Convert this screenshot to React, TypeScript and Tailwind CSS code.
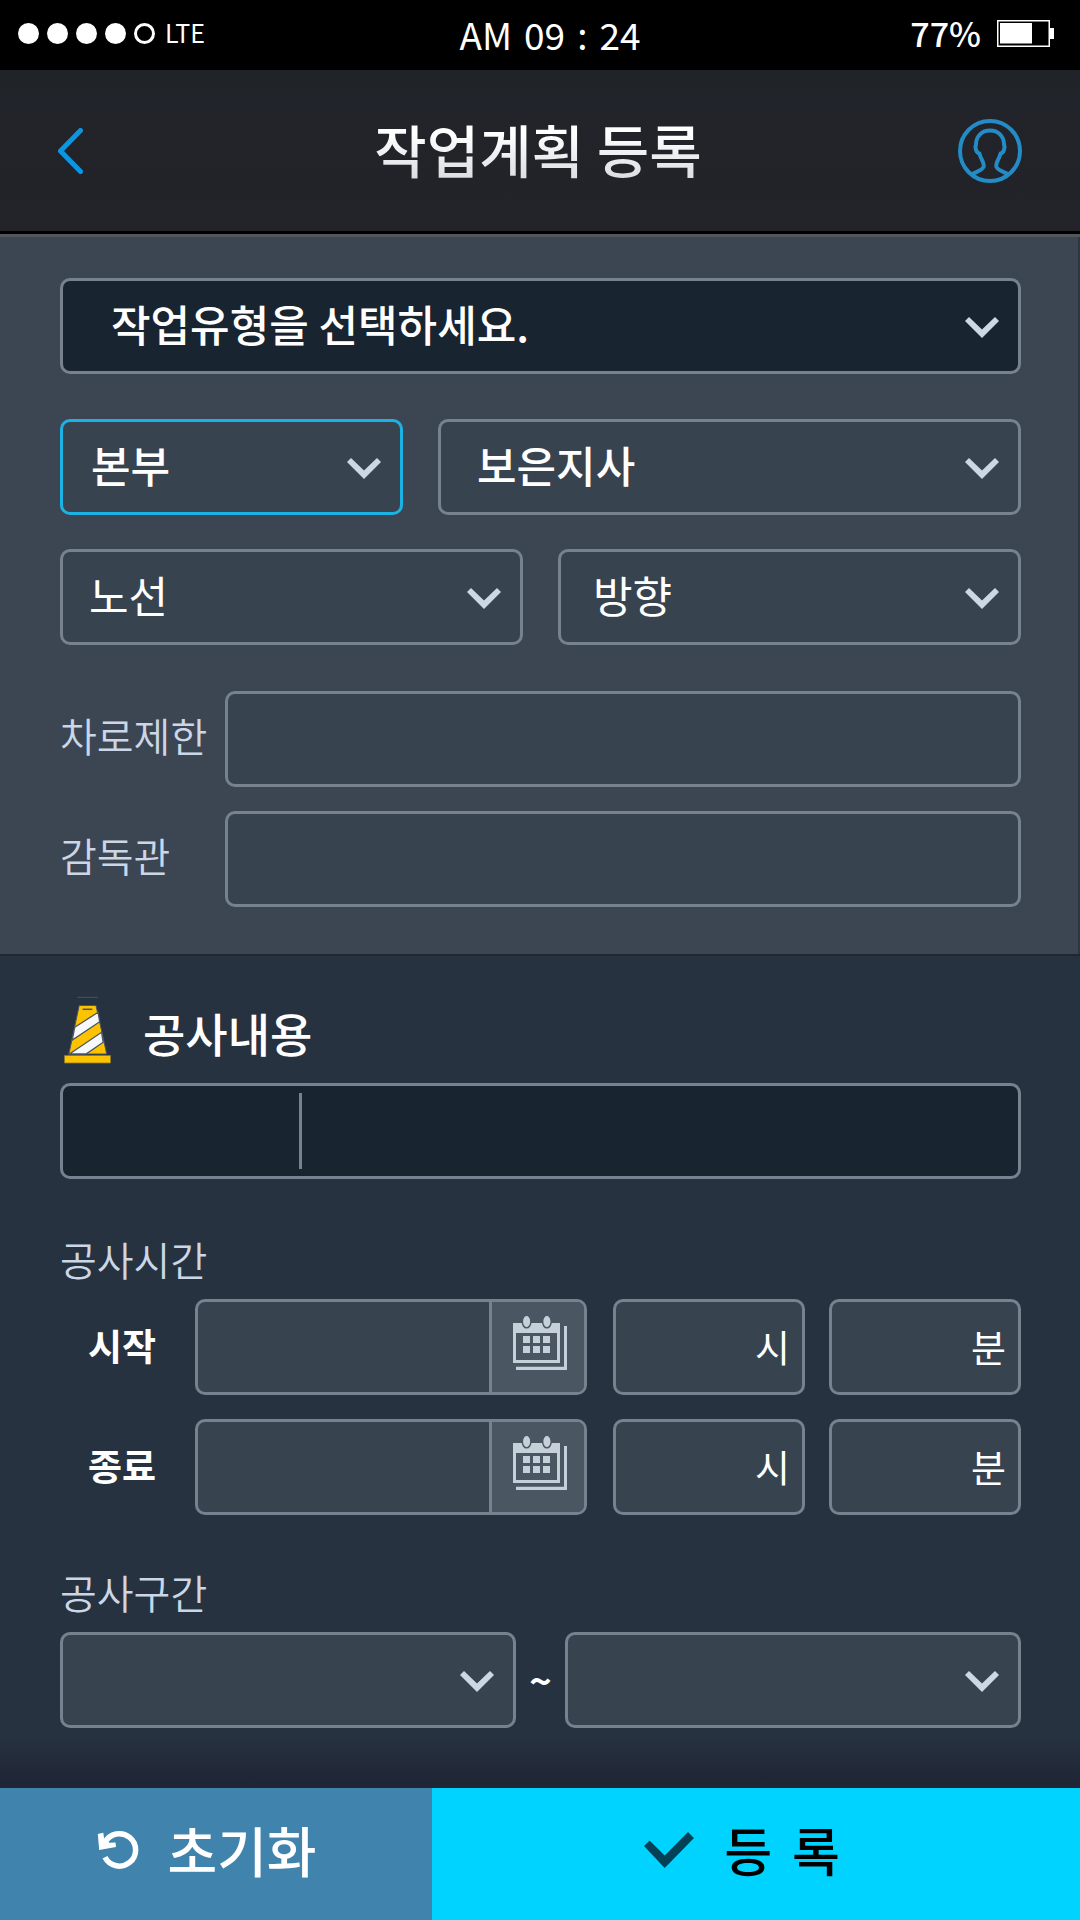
import type { ReactNode } from "react";

const frame = "h-24 w-full min-w-0 appearance-none rounded-[10px] border-[3px] text-white outline-none";
const box = `${frame} border-[#76828f] bg-[#384350]`;
const darkBox = `${frame} border-[#76828f] bg-[#192431]`;
const activeBox = `${frame} border-[#1cb2e3] bg-[#384350]`;

function Chevron() {
  return (
    <svg
      className="pointer-events-none absolute top-[39px] right-[22px] h-[21px] w-[34px]"
      viewBox="0 0 34 21"
      fill="#cdd8e7"
      aria-hidden="true"
    >
      <path d="M0 4 4 0l13 12.500L30 0l4 4-17 17z" />
    </svg>
  );
}

function SelectBox({
  label,
  value,
  className,
  look = box,
}: {
  label: string;
  value: string;
  className: string;
  look?: string;
}) {
  return (
    <div className="relative min-w-0 flex-1">
      <select aria-label={label} defaultValue={value} className={`${look} pr-16 pb-1.5 ${className}`}>
        <option value={value}>{value}</option>
      </select>
      <Chevron />
    </div>
  );
}

function LabelledInput({ id, label }: { id: string; label: string }) {
  return (
    <div className="flex items-center">
      <label htmlFor={id} className="w-[165px] shrink-0 pb-2 text-[40px] leading-[56px] font-[350] whitespace-nowrap text-[#cbd7e6]">
        {label}
      </label>
      <input id={id} type="text" className={`${box} px-6 text-[40px]`} />
    </div>
  );
}

function CalendarIcon() {
  return (
    <svg className="mb-2 ml-1 h-[54px] w-[54px]" viewBox="0 0 54 54" fill="#c5d0d9" aria-hidden="true">
      <path fillRule="evenodd" d="M0 7h47v40H0zM3 17v27h41V17z" />
      <path d="M10 20h7v7h-7zM20 20h7v7h-7zM30 20h7v7h-7zM10 30h7v7h-7zM20 30h7v7h-7zM30 30h7v7h-7z" />
      <path d="M51 10h3v44H3v-3.300h48z" />
      <g stroke="#4b5663" strokeWidth="1.500">
        <ellipse cx="13.600" cy="5.500" rx="4.300" ry="6.300" />
        <ellipse cx="33.900" cy="5.500" rx="4.300" ry="6.300" />
      </g>
    </svg>
  );
}

function UnitInput({ label, unit }: { label: string; unit: string }) {
  return (
    <label className="flex h-24 w-48 shrink-0 items-center rounded-[10px] border-[3px] border-[#76828f] bg-[#384350] pr-3 pb-1 pl-4 text-[38px] text-white">
      <input type="text" aria-label={label} className="w-0 flex-1 bg-transparent outline-none" />
      <span>{unit}</span>
    </label>
  );
}

function TimeRow({ id, label }: { id: string; label: string }) {
  return (
    <div className="flex items-center gap-6">
      <div className="flex min-w-0 flex-1 items-center pr-0.5">
        <label htmlFor={id} className="w-[135px] shrink-0 pb-1 pl-7 text-[37px] leading-[52px] font-bold text-white">
          {label}
        </label>
        <div className="flex h-24 min-w-0 flex-1 overflow-hidden rounded-[10px] border-[3px] border-[#76828f] bg-[#384350]">
          <input id={id} type="text" className="w-0 flex-1 bg-transparent px-4 text-[36px] text-white outline-none" />
          <button
            type="button"
            aria-label={`${label} 날짜 선택`}
            className="flex w-[95px] items-center justify-center border-l-[3px] border-[#76828f] bg-[#4b5663]"
          >
            <CalendarIcon />
          </button>
        </div>
      </div>
      <UnitInput label={`${label} 시`} unit="시" />
      <UnitInput label={`${label} 분`} unit="분" />
    </div>
  );
}

function GroupLabel({ children }: { children: ReactNode }) {
  return <h3 className="text-[40px] leading-[56px] font-[350] text-[#cbd7e6]">{children}</h3>;
}

function StatusBar() {
  return (
    <div className="grid h-[70px] grid-cols-[1fr_auto_1fr] items-center bg-black text-white">
      <div className="flex items-center pb-1 pl-[18px]">
        <div className="flex gap-2">
          <span className="size-[21px] rounded-full bg-white" />
          <span className="size-[21px] rounded-full bg-white" />
          <span className="size-[21px] rounded-full bg-white" />
          <span className="size-[21px] rounded-full bg-white" />
          <span className="size-[21px] rounded-full border-[3px] border-white" />
        </div>
        <span className="ml-2.5 pb-0.5 text-[25px] leading-8">LTE</span>
      </div>
      <span className="flex gap-3 pb-0.5 pl-5 text-[37px] leading-[50px]">
        <span>AM</span> <span>09</span> <span>:</span> <span>24</span>
      </span>
      <div className="flex items-center justify-end gap-4 pr-[26px] pb-1">
        <span className="text-[34px] leading-[50px] font-medium">77%</span>
        <svg className="h-[27px] w-[57px]" viewBox="0 0 57 27" fill="#fff" aria-hidden="true">
          <path fillRule="evenodd" d="M0 0h53v8h4v11h-4v8H0zM1.500 1.500v24h50v-24z" />
          <path d="M3 3h32v20.500H3z" />
        </svg>
      </div>
    </div>
  );
}

export default function App() {
  return (
    <div className="flex min-h-screen flex-col bg-[#273240] font-['Noto_Sans_CJK_KR',sans-serif]">
      <StatusBar />
      <header className="flex h-[164px] items-center justify-between border-b-[3px] border-black bg-linear-to-b from-[#202429] to-[#232329] px-[58px]">
        <button type="button" aria-label="뒤로" className="flex w-[60px]">
          <svg className="h-[46px] w-[25px]" viewBox="0 0 25 46" fill="none" stroke="#0c95e3" strokeWidth="5" strokeLinecap="round" strokeLinejoin="round" aria-hidden="true">
            <path d="M22.500 2.500 2.500 23l20 20.500" />
          </svg>
        </button>
        <h1 className="bg-linear-to-b from-white from-30% to-[#dcdee2] to-80% bg-clip-text pb-1.5 text-[57px] leading-[84px] font-medium text-transparent">
          작업계획 등록
        </h1>
        <button type="button" aria-label="내 정보">
          <svg className="size-16" viewBox="0 0 64 64" fill="none" stroke="#238cc6" strokeWidth="4" strokeLinejoin="round" aria-hidden="true">
            <circle cx="32" cy="32" r="30" />
            <path d="M13 55.500c6-3 11-4 12.500-7.500 1.500-4-3-8-4-13.500-3-.5-5-6-3.500-9C18 17 24 11.500 32 11.500S46 17 46 25.500c1.500 3-.5 8.500-3.500 9-1 5.500-5.500 9.500-4 13.500C40 51.500 45 52.500 51 55.500" />
          </svg>
        </button>
      </header>

      <section className="flex flex-col border-t-[3px] border-t-[#50565a] border-b-2 border-b-[#1d2834] bg-[#3c4653] pt-[41px] pr-[59px] pb-[47px] pl-[60px] shadow-[inset_-2px_0_0_#2b3642]">
        <div className="flex">
          <SelectBox label="작업유형" value="작업유형을 선택하세요." look={darkBox} className="pl-12 text-[43px] font-medium" />
        </div>
        <div className="mt-[45px] grid grid-cols-[343fr_583fr] gap-[35px]">
          <SelectBox label="본부" value="본부" look={activeBox} className="pl-7 text-[43px] font-medium" />
          <SelectBox label="지사" value="보은지사" className="pl-9 text-[43px] font-medium" />
        </div>
        <div className="mt-[34px] grid grid-cols-2 gap-[35px]">
          <SelectBox label="노선" value="노선" className="pl-[26px] text-[43px]" />
          <SelectBox label="방향" value="방향" className="pl-8 text-[43px]" />
        </div>
        <div className="mt-[46px] flex flex-col gap-6">
          <LabelledInput id="lane" label="차로제한" />
          <LabelledInput id="supervisor" label="감독관" />
        </div>
      </section>

      <main className="flex flex-1 flex-col pt-[39px] pr-[59px] pl-[60px]">
        <h2 className="flex h-[70px] items-center gap-8 pl-1">
          <svg className="h-[68px] w-[47px]" viewBox="0 0 47 68" aria-hidden="true">
            <path d="M13.500 1.300H34" stroke="#46535f" />
            <path d="M15.200 9.500H32L42.700 58H4.900z" fill="#fdc300" stroke="#4a5560" />
            <path d="m10.700 31.300 23.400-15 1.600 9.500L8.300 44zM5.500 58l32.100-21.700 1.600 10L22 58z" fill="#f7f9fb" stroke="#4a5560" strokeWidth="1.300" />
            <path d="M18.600 13.300h9.700" stroke="#4a5560" strokeWidth="1.500" />
            <path d="M.5 59.500h46V67H.5z" fill="#fdc300" stroke="#8a7a2c" strokeWidth=".8" />
          </svg>
          <span className="pt-1 text-[46px] leading-[66px] font-medium text-white">공사내용</span>
        </h2>
        <div className="relative mt-[18px]">
          <input type="text" aria-label="공사내용" className={`${darkBox} px-6 text-[40px]`} />
          <span className="absolute top-2.5 left-[239px] h-19 w-[3px] bg-[#76828f]" />
        </div>

        <div className="mt-[52px]">
          <GroupLabel>공사시간</GroupLabel>
          <div className="mt-3 flex flex-col gap-6">
            <TimeRow id="start" label="시작" />
            <TimeRow id="end" label="종료" />
          </div>
        </div>

        <div className="mt-[49px]">
          <GroupLabel>공사구간</GroupLabel>
          <div className="mt-3 flex items-center">
            <SelectBox label="시작 구간" value="" className="pl-6 text-[40px]" />
            <span className="w-[49px] text-center text-[38px] leading-[52px] font-bold text-white">~</span>
            <SelectBox label="종료 구간" value="" className="pl-6 text-[40px]" />
          </div>
        </div>
      </main>

      <div className="h-14 bg-linear-to-b from-[#273240] to-[#1e2534]" />
      <footer className="grid h-33 grid-cols-[2fr_3fr]">
        <button type="button" className="flex items-center justify-center gap-7 bg-[#4083ad] pr-[18px] pb-2 text-white">
          <svg className="h-10 w-[42px]" viewBox="-1 -1 42 40" aria-hidden="true">
            <path d="M7 26.300A16.200 16.200 0 1 0 7 11.500" fill="none" stroke="#fff" strokeWidth="5.500" />
            <path d="m-.2 3 5.500-1.300 1 7 5.200 3 6-.2.500 4.500L1.200 19z" fill="#fff" />
          </svg>
          <span className="text-[54px] leading-[78px] font-medium">초기화</span>
        </button>
        <button type="button" className="flex items-center justify-center gap-[30px] bg-[#00d3ff] pr-7 pb-2 text-black">
          <svg className="h-9 w-[50px]" viewBox="0 0 50 36" fill="#044157" aria-hidden="true">
            <path d="m0 14 5.500-5.500 15.200 15L44 0l6 6-29.300 30z" />
          </svg>
          <span className="flex gap-5 text-[52px] leading-[76px] font-medium">
            <span>등</span> <span>록</span>
          </span>
        </button>
      </footer>
    </div>
  );
}
